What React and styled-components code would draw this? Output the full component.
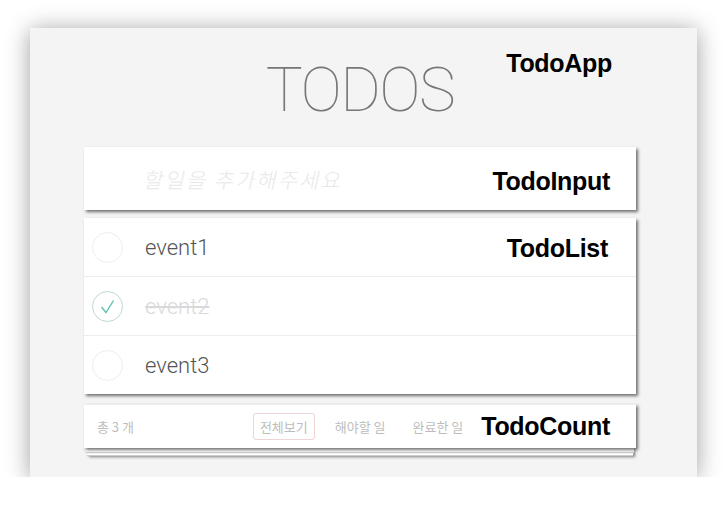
import React from 'react';
import styled, { createGlobalStyle } from 'styled-components';

const GlobalStyle = createGlobalStyle`
  body {
    margin: 0;
    background: #fff;
    font-family: "Liberation Sans", "Noto Sans CJK KR", sans-serif;
  }
`;

const todos = [
    { id: 1, text: 'event1', done: false },
    { id: 2, text: 'event2', done: true },
    { id: 3, text: 'event3', done: false },
];

const App = () => {
    return (
        <>
            <GlobalStyle />
            <Window>
                <Header>
                    <Title>TODOS</Title>
                    <Label>TodoApp</Label>
                </Header>
                <InputCard>
                    <Placeholder>할일을 추가해주세요</Placeholder>
                    <Label>TodoInput</Label>
                </InputCard>
                <ListCard>
                    {todos.map((todo, i) => (
                        <Row key={todo.id}>
                            <Check done={todo.done}>
                                {todo.done && (
                                    <svg width="20" height="20" viewBox="0 0 20 20">
                                        <path d="M3.5 11 L8 16.5 L15.5 4.5" fill="none" stroke="#5dc2af" strokeWidth="1.4" />
                                    </svg>
                                )}
                            </Check>
                            <ItemText done={todo.done}>{todo.text}</ItemText>
                            {i === 0 && <Label>TodoList</Label>}
                        </Row>
                    ))}
                </ListCard>
                <CountCard>
                    <Total>총 3 개</Total>
                    <Filters>
                        <Filter selected>전체보기</Filter>
                        <Filter>해야할 일</Filter>
                        <Filter>완료한 일</Filter>
                    </Filters>
                    <Label>TodoCount</Label>
                </CountCard>
            </Window>
        </>
    );
};

export default App;

const Window = styled.div`
position: relative;
z-index: 0;
margin: 28px 0 0 30px;
width: 667px;
height: 449px;
background: #f4f4f4;
box-shadow: 0 2px 22px rgba(0, 0, 0, 0.38);
padding-left: 54px;
box-sizing: border-box;
`;

const Label = styled.span`
font-family: "Liberation Sans", Arial, sans-serif;
font-weight: bold;
font-size: 25px;
letter-spacing: -0.3px;
color: #000;
white-space: nowrap;
`;

const Header = styled.div`
width: 552px;
height: 119px;
display: grid;
grid-template-columns: 1fr auto 1fr;
align-items: start;

${Label} {
    margin: 21px 0 0 52px;
}
`;

const Title = styled.h1`
grid-column: 2;
margin: 31px 0 0;
font-family: Roboto, "Liberation Sans", sans-serif;
font-weight: 100;
font-size: 62px;
line-height: 62px;
color: #777;
letter-spacing: -1.5px;
`;

const Card = styled.div`
width: 552px;
background: #fff;
box-shadow: 2px 2px 3px rgba(0, 0, 0, 0.55);
box-sizing: border-box;
display: flex;
align-items: center;
padding-right: 26px;

${Label} {
    margin-left: auto;
}
`;

const InputCard = styled(Card)`
height: 63px;
padding-left: 61px;

${Label} {
    margin-top: 6px;
}
`;

const Placeholder = styled.span`
font-family: "Noto Sans CJK KR", sans-serif;
font-weight: 300;
font-size: 21px;
letter-spacing: 2px;
color: #e8e8e8;
transform: skewX(-12deg);
display: inline-block;
`;

const ListCard = styled(Card)`
margin-top: 8px;
display: block;
padding-right: 0;
`;

const Row = styled.div`
height: 58px;
display: flex;
align-items: center;
padding: 0 28px 0 8px;
border-top: 1px solid #ededed;

&:first-child {
    border-top: none;
}

${Label} {
    margin-top: 2px;
}
`;

const Check = styled.div`
width: 31px;
height: 31px;
border-radius: 50%;
border: 1px solid ${props => (props.done ? '#bddad5' : '#ededed')};
display: flex;
align-items: center;
justify-content: center;
box-sizing: border-box;
margin-right: 22px;
`;

const ItemText = styled.span`
font-family: Roboto, "Liberation Sans", sans-serif;
font-weight: 300;
font-size: 22px;
color: ${props => (props.done ? '#d9d9d9' : '#555')};
text-decoration: ${props => (props.done ? 'line-through' : 'none')};
`;

const CountCard = styled(Card)`
position: relative;
margin-top: 10px;
height: 44px;
padding-left: 13px;
font-family: "Noto Sans CJK KR", sans-serif;
font-size: 13px;
color: #bdbdbd;
border-top: 1px solid #ececec;

&::before {
    content: '';
    position: absolute;
    left: 2px;
    right: 2px;
    top: 100%;
    height: 10px;
    margin-top: -6px;
    z-index: -1;
    background: #fff;
    box-shadow: 0 1px 1px #ccc, 0 4px 0 -1px #fff, 0 5px 1px -1px #ccc, 2px 6px 3px -1px rgba(0, 0, 0, 0.5);
}

${Label} {
    margin-left: 11px;
}
`;

const Total = styled.span`
margin-right: auto;
`;

const Filters = styled.div`
display: flex;
gap: 13px;
align-items: center;
`;

const Filter = styled.span`
padding: 3px 6px;
border: 1px solid ${props => (props.selected ? 'rgba(175, 47, 47, 0.2)' : 'transparent')};
border-radius: 3px;
`;
